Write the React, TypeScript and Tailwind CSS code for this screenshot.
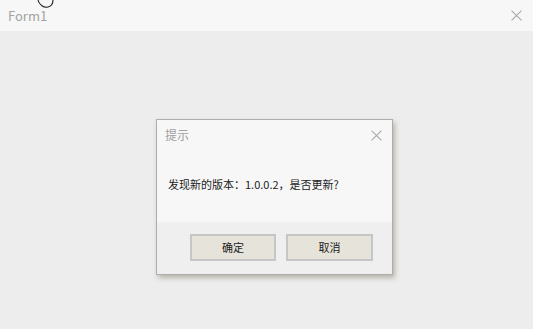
import React from "react";

const X = ({ size, color }: { size: number; color: string }) => (
  <svg width={size} height={size} viewBox="0 0 10 10">
    <path d="M0.5 0.5 L9.5 9.5 M9.5 0.5 L0.5 9.5" stroke={color} strokeWidth="1" fill="none" />
  </svg>
);

export default function App() {
  const font = { fontFamily: '"Noto Sans CJK SC", "Noto Sans", sans-serif' };
  return (
    <div className="w-[533px] h-[329px] bg-[#ededed] flex flex-col overflow-hidden relative" style={font}>
      <div className="h-[31px] bg-[#f7f7f7] flex items-center justify-between pl-[8px] pr-[11px] shrink-0">
        <span className="text-[13px] text-[#a3a3a3] leading-none">Form1</span>
        <X size={11} color="#a8a8a8" />
      </div>
      <svg className="absolute left-[36px] top-0" width="22" height="10" viewBox="0 0 22 10">
        <path d="M2 0 C3 5 8 8 12 7 C16 6 17 3 17 0" stroke="#222" strokeWidth="1.1" fill="none" />
      </svg>
      <div className="pl-[156px] pt-[88px]">
        <div className="w-[237px] h-[156px] border border-[#adadad] flex flex-col shadow-[2px_3px_5px_rgba(120,110,90,0.45)]">
          <div className="bg-[#f7f7f7] h-[102px] flex flex-col">
            <div className="h-[30px] flex items-center justify-between pl-[8px] pr-[10px]">
              <span className="text-[12px] text-[#a0a0a0] leading-none">提示</span>
              <X size={11} color="#a8a8a8" />
            </div>
            <div className="pl-[11px] pt-[29px] text-[11px] text-[#222] leading-none">发现新的版本：1.0.0.2，是否更新?</div>
          </div>
          <div className="flex-1 bg-[#efefef] flex gap-[10px] pl-[33px] pt-[12px]">
            <div className="w-[86px] h-[27px] bg-[#e6e3da] border-2 border-[#c6c6c6] flex items-center justify-center text-[11px] text-[#222]">确定</div>
            <div className="w-[87px] h-[27px] bg-[#e6e3da] border-2 border-[#c6c6c6] flex items-center justify-center text-[11px] text-[#222]">取消</div>
          </div>
        </div>
      </div>
    </div>
  );
}
